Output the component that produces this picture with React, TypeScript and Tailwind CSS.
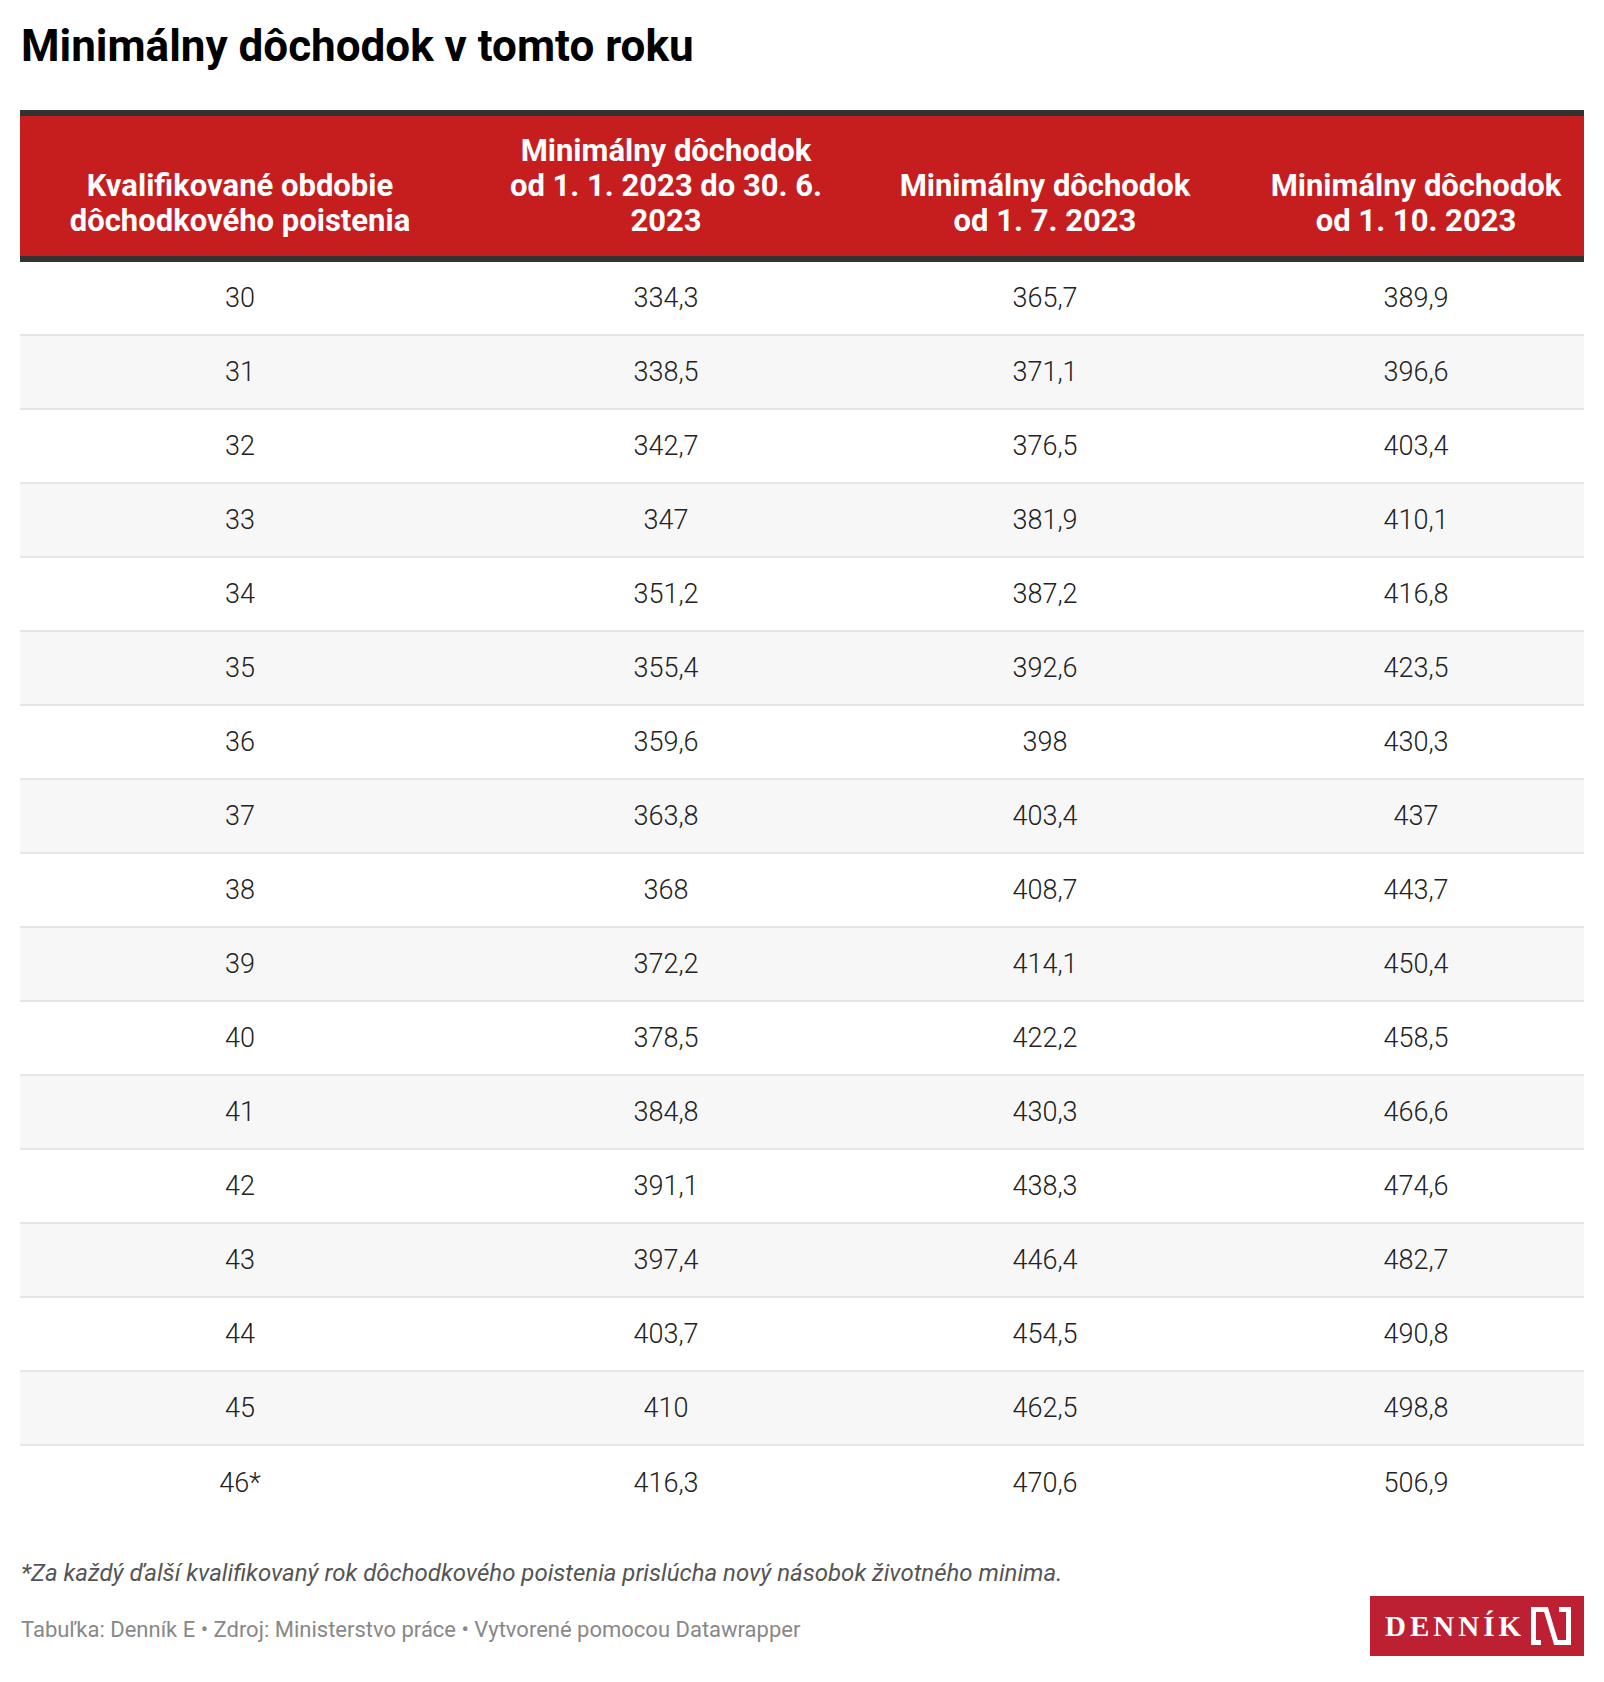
import React from "react";

const rows: [string, string, string, string][] = [
  ["30", "334,3", "365,7", "389,9"],
  ["31", "338,5", "371,1", "396,6"],
  ["32", "342,7", "376,5", "403,4"],
  ["33", "347", "381,9", "410,1"],
  ["34", "351,2", "387,2", "416,8"],
  ["35", "355,4", "392,6", "423,5"],
  ["36", "359,6", "398", "430,3"],
  ["37", "363,8", "403,4", "437"],
  ["38", "368", "408,7", "443,7"],
  ["39", "372,2", "414,1", "450,4"],
  ["40", "378,5", "422,2", "458,5"],
  ["41", "384,8", "430,3", "466,6"],
  ["42", "391,1", "438,3", "474,6"],
  ["43", "397,4", "446,4", "482,7"],
  ["44", "403,7", "454,5", "490,8"],
  ["45", "410", "462,5", "498,8"],
  ["46*", "416,3", "470,6", "506,9"],
];

function Logo() {
  return (
    <div className="flex h-[60px] w-[214px] items-center bg-[#be2033] pl-[15px]">
      <span
        className="text-[29px] font-bold leading-none tracking-[4px] text-white"
        style={{ fontFamily: '"Liberation Serif", "DejaVu Serif", serif' }}
      >
        DENNÍK
      </span>
      <svg
        className="ml-[6px]"
        width="40"
        height="38"
        viewBox="0 0 40 38"
        fill="none"
      >
        <path
          d="M 10 35.5 H 2.5 V 2.5 H 15 L 25 35.5 H 37.5 V 2.5 H 28"
          stroke="#fff"
          strokeWidth="5"
          strokeLinejoin="miter"
          strokeLinecap="butt"
        />
      </svg>
    </div>
  );
}

export default function App() {
  return (
    <div
      className="w-[1604px] bg-white px-[20px] pb-[28px] pt-[24px] text-[#222]"
      style={{ fontFamily: 'Roboto, "Liberation Sans", sans-serif' }}
    >
      <h1 className="pl-[1px] text-[44px] font-bold leading-[44px] text-black">
        Minimálny dôchodok v tomto roku
      </h1>

      <div className="mt-[42px]">
        <div className="grid h-[152px] grid-cols-[440px_412px_346px_366px] items-end border-y-[6px] border-[#333] bg-[#c61d1f] pb-[18px] text-center text-[31px] font-bold leading-[35px] text-white">
          <div>
            Kvalifikované obdobie
            <br />
            dôchodkového poistenia
          </div>
          <div>
            Minimálny dôchodok
            <br />
            od 1. 1. 2023 do 30. 6.
            <br />
            2023
          </div>
          <div>
            Minimálny dôchodok
            <br />
            od 1. 7. 2023
          </div>
          <div className="pl-[30px]">
            Minimálny dôchodok
            <br />
            od 1. 10. 2023
          </div>
        </div>

        {rows.map((r, i) => (
          <div
            key={r[0]}
            className={
              "grid h-[74px] grid-cols-[440px_412px_346px_366px] items-center text-center text-[27px] font-light text-[#222] " +
              (i % 2 === 1 ? "bg-[#f7f7f7] " : "bg-white ") +
              (i === rows.length - 1 ? "" : "border-b-2 border-[#e6e6e6]")
            }
          >
            <div>{r[0]}</div>
            <div>{r[1]}</div>
            <div>{r[2]}</div>
            <div className="pl-[30px]">{r[3]}</div>
          </div>
        ))}
      </div>

      <p className="mt-[41px] pl-[1px] text-[24px] italic leading-[24px] text-[#555]">
        *Za každý ďalší kvalifikovaný rok dôchodkového poistenia prislúcha nový násobok životného minima.
      </p>

      <div className="mt-[11px] flex items-center justify-between">
        <div className="pl-[1px] pt-[8px] text-[22px] leading-[22px] text-[#888]">
          Tabuľka: Denník E • Zdroj: Ministerstvo práce • Vytvorené pomocou Datawrapper
        </div>
        <Logo />
      </div>
    </div>
  );
}
